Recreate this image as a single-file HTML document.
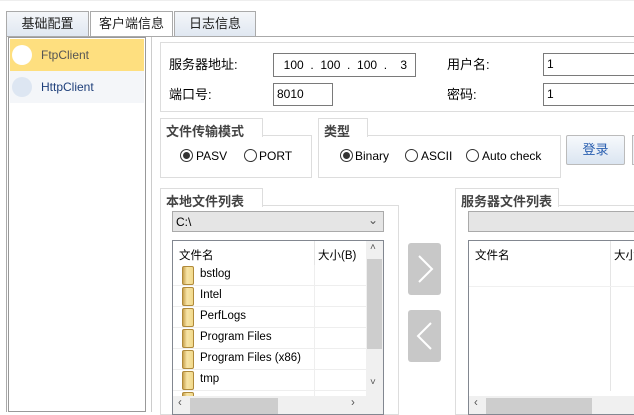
<!DOCTYPE html>
<html><head><meta charset="utf-8"><style>
*{box-sizing:border-box;margin:0;padding:0;white-space:nowrap}
body{width:634px;height:412px;overflow:hidden;background:#fff;font-family:"Liberation Sans","Noto Sans CJK SC",sans-serif;font-size:12px;color:#000;position:relative}
.a{position:absolute}
.tab{position:absolute;top:11px;height:26px;border:1px solid #aaa;border-bottom:none;text-align:center;line-height:24px;font-size:13px;color:#222;background:linear-gradient(#f4f6f9,#dfe7f1)}
.inp{position:absolute;border:1px solid #7a7a7a;background:#fff;font-size:12px;line-height:20px;padding-left:3px}
.grp{position:absolute;border:1px solid #ddd}
.gt{position:absolute;font-weight:bold;color:#444;font-size:13px;background:#fff;border:1px solid #ddd;border-bottom:none;padding:2px 6px 0 5px;height:19px}
.rad{position:absolute;width:13px;height:13px;border:1px solid #333;border-radius:50%;background:#fff}
.rad.on::after{content:"";position:absolute;left:2px;top:2px;width:7px;height:7px;border-radius:50%;background:#333}
.row{position:absolute;left:0;width:194px;height:21px;border-bottom:1px solid #eee}
.fold{position:absolute;left:9px;top:1px;width:12px;height:19px;background:linear-gradient(90deg,#c9a24e,#f7e4a6 40%,#f1d98c);border:1px solid #b08a3a;border-radius:2px}
.fn{position:absolute;left:27px;top:3px}
</style></head><body>
<div class="a" style="left:0;top:0;width:634px;height:1px;background:#eee"></div>
<div class="tab" style="left:6px;width:83px">基础配置</div>
<div class="tab" style="left:90px;width:83px;background:#fff">客户端信息</div>
<div class="tab" style="left:174px;width:82px">日志信息</div>
<div class="a" style="left:6px;top:36px;width:628px;height:1px;background:#aaa"></div>
<div class="a" style="left:6px;top:36px;width:1px;height:376px;background:#aaa"></div>
<div class="a" style="left:8px;top:37px;width:138px;height:375px;border:1px solid #999;background:#fff"></div>
<div class="a" style="left:10px;top:39px;width:134px;height:32px;background:#fedf7f"></div>
<div class="a" style="left:12px;top:45px;width:20px;height:20px;border-radius:50%;background:#fff"></div>
<div class="a" style="left:41px;top:48px;color:#555">FtpClient</div>
<div class="a" style="left:10px;top:71px;width:134px;height:32px;background:#f4f6f9"></div>
<div class="a" style="left:12px;top:77px;width:20px;height:20px;border-radius:50%;background:#dde6f2"></div>
<div class="a" style="left:41px;top:80px;color:#1e3f7a">HttpClient</div>
<div class="a" style="left:151px;top:37px;width:1px;height:375px;background:#ccc"></div>
<div class="grp" style="left:160px;top:42px;width:480px;height:70px"></div>
<div class="a" style="left:169px;top:54px;font-size:13px">服务器地址:</div>
<div class="inp" style="left:273px;top:53px;width:143px;height:24px;line-height:22px">&nbsp;&nbsp;100&nbsp;&nbsp;.&nbsp;&nbsp;100&nbsp;&nbsp;.&nbsp;&nbsp;100&nbsp;&nbsp;.&nbsp;&nbsp;&nbsp;&nbsp;3</div>
<div class="a" style="left:447px;top:54px;font-size:13px">用户名:</div>
<div class="inp" style="left:543px;top:53px;width:100px;height:23px">1</div>
<div class="a" style="left:169px;top:84px;font-size:13px">端口号:</div>
<div class="inp" style="left:273px;top:83px;width:60px;height:23px">8010</div>
<div class="a" style="left:447px;top:84px;font-size:13px">密码:</div>
<div class="inp" style="left:543px;top:83px;width:100px;height:23px">1</div>
<div class="grp" style="left:160px;top:135px;width:152px;height:43px"></div>
<div class="gt" style="left:160px;top:118px;width:103px">文件传输模式</div>
<div class="rad on" style="left:180px;top:149px"></div><div class="a" style="left:196px;top:149px">PASV</div>
<div class="rad" style="left:244px;top:149px"></div><div class="a" style="left:259px;top:149px">PORT</div>
<div class="grp" style="left:318px;top:135px;width:243px;height:43px"></div>
<div class="gt" style="left:318px;top:118px;width:50px">类型</div>
<div class="rad on" style="left:340px;top:149px"></div><div class="a" style="left:355px;top:149px">Binary</div>
<div class="rad" style="left:405px;top:149px"></div><div class="a" style="left:421px;top:149px">ASCII</div>
<div class="rad" style="left:466px;top:149px"></div><div class="a" style="left:482px;top:149px">Auto check</div>
<div class="a" style="left:566px;top:135px;width:59px;height:30px;border:1px solid #bbb;border-radius:2px;background:linear-gradient(#f7f9fc,#dbe5f1);color:#2a5fb0;text-align:center;line-height:28px;font-size:13px">登录</div>
<div class="a" style="left:632px;top:135px;width:4px;height:30px;border:1px solid #bbb;background:#eef2f8"></div>
<div class="grp" style="left:160px;top:205px;width:239px;height:210px"></div>
<div class="gt" style="left:160px;top:188px;width:103px">本地文件列表</div>
<div class="a" style="left:172px;top:211px;width:212px;height:21px;border:1px solid #aaa;background:#e5e5e5;padding:3px 0 0 3px">C:\<span style="position:absolute;right:5px;top:1px;color:#555">⌄</span></div>
<div class="a" style="left:172px;top:240px;width:212px;height:175px;border:1px solid #828790;background:#fff;overflow:hidden;font-size:11.5px">
 <div class="a" style="left:6px;top:6px">文件名</div>
 <div class="a" style="left:141px;top:0;width:1px;height:24px;background:#e5e5e5"></div>
 <div class="a" style="left:145px;top:6px">大小(B)</div>
 <div class="a" style="left:141px;top:24px;width:1px;height:150px;background:#eee"></div>
 <div class="row" style="top:24px"><div class="fold"></div><div class="fn">bstlog</div></div>
 <div class="row" style="top:45px"><div class="fold"></div><div class="fn">Intel</div></div>
 <div class="row" style="top:66px"><div class="fold"></div><div class="fn">PerfLogs</div></div>
 <div class="row" style="top:87px"><div class="fold"></div><div class="fn">Program Files</div></div>
 <div class="row" style="top:108px"><div class="fold"></div><div class="fn">Program Files (x86)</div></div>
 <div class="row" style="top:129px"><div class="fold"></div><div class="fn">tmp</div></div>
 <div class="row" style="top:150px"><div class="fold"></div></div>
 <div class="a" style="left:193px;top:0;width:17px;height:155px;background:#f0f0f0"></div>
 <div class="a" style="left:194px;top:18px;width:15px;height:90px;background:#cdcdcd"></div>
 <div class="a" style="left:197px;top:1px;font-size:10px;color:#555">˄</div>
 <div class="a" style="left:197px;top:136px;font-size:10px;color:#555">˅</div>
 <div class="a" style="left:0;top:155px;width:210px;height:18px;background:#f0f0f0"></div>
 <div class="a" style="left:17px;top:157px;width:88px;height:16px;background:#cdcdcd"></div>
 <div class="a" style="left:5px;top:156px;color:#555">‹</div>
 <div class="a" style="left:178px;top:156px;color:#555">›</div>
</div>
<div class="a" style="left:408px;top:243px;width:33px;height:52px;background:#c8c8c8;border-radius:3px"><svg width="33" height="52"><path d="M11 13 L24 26 L11 39" fill="none" stroke="#fff" stroke-width="2"/></svg></div>
<div class="a" style="left:408px;top:310px;width:33px;height:52px;background:#c8c8c8;border-radius:3px"><svg width="33" height="52"><path d="M23 13 L10 26 L23 39" fill="none" stroke="#fff" stroke-width="2"/></svg></div>
<div class="grp" style="left:455px;top:205px;width:190px;height:210px"></div>
<div class="gt" style="left:455px;top:188px;width:104px">服务器文件列表</div>
<div class="a" style="left:468px;top:211px;width:170px;height:21px;border:1px solid #aaa;background:#e5e5e5"></div>
<div class="a" style="left:468px;top:240px;width:170px;height:175px;border:1px solid #828790;background:#fff;overflow:hidden;font-size:11.5px">
 <div class="a" style="left:6px;top:6px">文件名</div>
 <div class="a" style="left:141px;top:0;width:1px;height:150px;background:#e5e5e5"></div>
 <div class="a" style="left:145px;top:6px">大小</div>
 <div class="a" style="left:0;top:45px;width:170px;height:1px;background:#f0f0f0"></div>
 <div class="a" style="left:0;top:155px;width:170px;height:18px;background:#f0f0f0"></div>
 <div class="a" style="left:17px;top:157px;width:106px;height:16px;background:#cdcdcd"></div>
 <div class="a" style="left:5px;top:156px;color:#555">‹</div>
</div>
</body></html>
